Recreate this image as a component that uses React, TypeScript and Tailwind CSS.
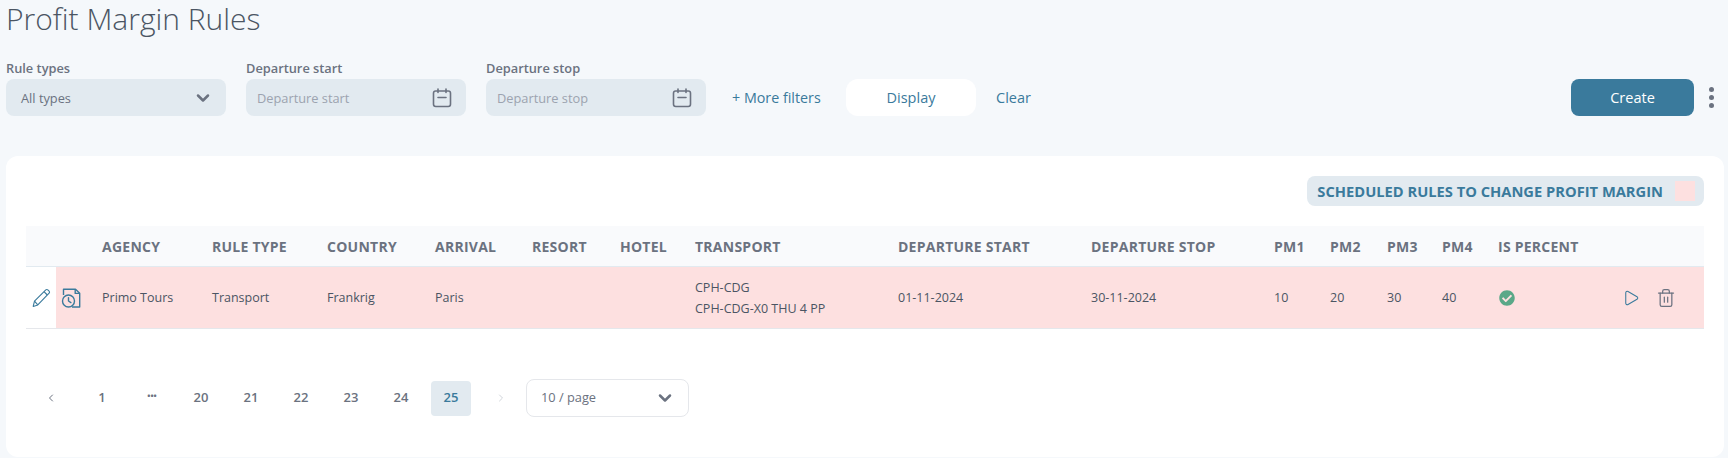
import React from "react";
import { Play, Trash2, ChevronLeft, ChevronRight, ChevronDown } from "lucide-react";
import { FaCheckCircle } from "react-icons/fa";

const font = "font-['Open_Sans',sans-serif]";

function Calendar() {
  return (
    <svg width="20" height="20" viewBox="0 0 20 20" fill="none" stroke="#6b7280" strokeWidth="1.6" strokeLinecap="round" strokeLinejoin="round">
      <rect x="1.5" y="3" width="17" height="15.5" rx="2.2" />
      <path d="M6 1v3.5M14 1v3.5M6 9.5h8" />
    </svg>
  );
}

function Pencil() {
  return (
    <svg width="20" height="20" viewBox="0 0 20 20" fill="none" stroke="#3a7a9c" strokeWidth="1.1" strokeLinejoin="round">
      <path d="M2.2 18.4l1.3-5.2L14.8 1.9a1.4 1.4 0 0 1 2 0l1.3 1.3a1.4 1.4 0 0 1 0 2L6.8 16.9z" />
      <path d="M3.5 13.2l3.3 3.7M13 3.7l3.3 3.3" />
    </svg>
  );
}

function FileClock() {
  return (
    <svg width="20" height="20" viewBox="0 0 20 20" fill="none" stroke="#3a7a9c" strokeWidth="1.4" strokeLinejoin="round">
      <path d="M2.5 7V1.2h12l4.2 4V19H11" />
      <path d="M14.2 1.2v4.2h4.5" />
      <circle cx="7.5" cy="13" r="6" />
      <path d="M7.5 9.6V13l2.4 1.6" strokeLinecap="round" />
    </svg>
  );
}

function Field({ label, value, placeholder }: { label: string; value: string; placeholder?: boolean }) {
  return (
    <div className="flex w-[220px] flex-col">
      <label className="h-[22px] text-[12.8px] leading-[22px] font-semibold text-[#6b7280]">{label}</label>
      <div className={`flex h-[37px] items-center justify-between rounded-lg bg-[#e2eaf0] ${placeholder ? "pr-[14px] pl-[11px]" : "pr-[13px] pl-[15px]"}`}>
        <span className={`pt-[2px] text-[12.8px] ${placeholder ? "text-[#9ca3af]" : "text-[#6b7280]"}`}>{value}</span>
        {placeholder ? <Calendar /> : <ChevronDown size={20} strokeWidth={3} className="text-[#6b7280]" />}
      </div>
    </div>
  );
}

const cols = [30, 46, 110, 115, 108, 97, 88, 75, 203, 193, 183, 56, 57, 55, 56, 124, 82];
const heads = ["", "", "AGENCY", "RULE TYPE", "COUNTRY", "ARRIVAL", "RESORT", "HOTEL", "TRANSPORT", "DEPARTURE START", "DEPARTURE STOP", "PM1", "PM2", "PM3", "PM4", "IS PERCENT", ""];

function PageNum({ n, active }: { n: string; active?: boolean }) {
  return (
    <div className={`flex h-[35px] w-[40px] items-center justify-center rounded text-[13px] font-semibold ${active ? "bg-[#e2eaf0] text-[#3a7a9c]" : "text-[#6b7280]"}`}>
      {n}
    </div>
  );
}

export default function App() {
  return (
    <div className={`h-[458px] w-[1728px] overflow-hidden bg-[#f5f8fb] pl-[6px] pr-[4px] ${font}`}>
      <h1 className="h-[47px] text-[30px] leading-[38px] font-light text-[#4b5563]">Profit Margin Rules</h1>
      <div className="flex h-[109px] items-start">
        <div className="flex gap-[20px] pt-[10px]">
          <Field label="Rule types" value="All types" />
          <Field label="Departure start" value="Departure start" placeholder />
          <Field label="Departure stop" value="Departure stop" placeholder />
        </div>
        <div className="mt-[32px] flex h-[37px] items-center">
          <span className="ml-[26px] w-[89px] text-[14.3px] whitespace-nowrap text-[#3a7a9c]">+ More filters</span>
          <div className="ml-[25px] flex h-[37px] w-[130px] items-center justify-center rounded-xl bg-white text-[14.5px] text-[#3a7a9c]">Display</div>
          <span className="ml-[20px] text-[14.5px] text-[#3a7a9c]">Clear</span>
        </div>
        <div className="mt-[32px] ml-auto flex h-[37px] items-center">
          <div className="flex h-[37px] w-[123px] items-center justify-center rounded-lg bg-[#3a7a9c] text-[14.5px] text-white">Create</div>
          <div className="mr-[10px] ml-[15px] flex flex-col gap-[3px]">
            <span className="h-[5px] w-[5px] rounded-full bg-[#6b7280]" />
            <span className="h-[5px] w-[5px] rounded-full bg-[#6b7280]" />
            <span className="h-[5px] w-[5px] rounded-full bg-[#6b7280]" />
          </div>
        </div>
      </div>
      <div className="h-[301px] rounded-xl bg-white px-[20px] pt-[20px]">
        <div className="flex justify-end">
          <div className="flex h-[30px] items-center rounded-lg bg-[#e2eaf0] pr-[9px] pl-[10px]">
            <span className="text-[14.7px] font-bold text-[#3a7a9c]">SCHEDULED RULES TO CHANGE PROFIT MARGIN</span>
            <span className="ml-[12px] h-[20px] w-[20px] bg-[#fde0e0]" />
          </div>
        </div>
        <table className="mt-[20px] w-[1678px] table-fixed border-collapse text-left">
          <colgroup>
            {cols.map((w, i) => (
              <col key={i} style={{ width: w }} />
            ))}
          </colgroup>
          <thead>
            <tr className="h-[40px] border-b border-[#e2eaf0] bg-[#f9fafc]">
              {heads.map((h, i) => (
                <th key={i} className="pt-[1px] text-[14px] font-bold tracking-[0.25px] whitespace-nowrap text-[#6b7280]">{h}</th>
              ))}
            </tr>
          </thead>
          <tbody>
            <tr className="h-[62px] border-b border-[#e5e7eb] text-[12.5px] text-[#4b5563] [&>td]:pt-[2px]">
              <td className="bg-white pl-[5px]"><Pencil /></td>
              <td className="bg-[#fde0e0] pl-[5px]"><FileClock /></td>
              <td className="bg-[#fde0e0]">Primo Tours</td>
              <td className="bg-[#fde0e0]">Transport</td>
              <td className="bg-[#fde0e0]">Frankrig</td>
              <td className="bg-[#fde0e0]">Paris</td>
              <td className="bg-[#fde0e0]"></td>
              <td className="bg-[#fde0e0]"></td>
              <td className="bg-[#fde0e0] leading-[21px]"><div>CPH-CDG</div><div>CPH-CDG-X0 THU 4 PP</div></td>
              <td className="bg-[#fde0e0]">01-11-2024</td>
              <td className="bg-[#fde0e0]">30-11-2024</td>
              <td className="bg-[#fde0e0]">10</td>
              <td className="bg-[#fde0e0]">20</td>
              <td className="bg-[#fde0e0]">30</td>
              <td className="bg-[#fde0e0]">40</td>
              <td className="bg-[#fde0e0]"><FaCheckCircle size={16} color="#5aa888" className="ml-[1px]" /></td>
              <td className="bg-[#fde0e0]">
                <div className="flex items-center gap-[16px]">
                  <Play size={18} strokeWidth={1.4} className="text-[#3a7a9c]" />
                  <Trash2 size={20} strokeWidth={1.5} className="text-[#6b7280]" />
                </div>
              </td>
            </tr>
          </tbody>
        </table>
        <div className="mt-[52px] flex items-start">
          <div className="flex h-[35px] items-center">
            <div className="flex w-[50px] justify-center"><ChevronLeft size={12} strokeWidth={2} className="text-[#6b7280]" /></div>
            <div className="ml-[6px]"><PageNum n="1" /></div>
            <div className="flex h-[35px] w-[59px] items-start justify-center pt-[9px] text-[11px] leading-[12px] tracking-[-1px] text-[#6b7280]">•••</div>
            <PageNum n="20" />
            <div className="ml-[10px]"><PageNum n="21" /></div>
            <div className="ml-[10px]"><PageNum n="22" /></div>
            <div className="ml-[10px]"><PageNum n="23" /></div>
            <div className="ml-[10px]"><PageNum n="24" /></div>
            <div className="ml-[10px]"><PageNum n="25" active /></div>
            <div className="flex w-[50px] justify-center pl-[9px]"><ChevronRight size={12} strokeWidth={2} className="text-[#d1d5db]" /></div>
          </div>
          <div className="mt-[-2px] ml-[5px] flex h-[38px] w-[163px] items-center justify-between rounded-lg border border-[#e5e7eb] pr-[13px] pl-[14px]">
            <span className="text-[12.8px] text-[#6b7280]">10 / page</span>
            <ChevronDown size={20} strokeWidth={3} className="text-[#6b7280]" />
          </div>
        </div>
      </div>
    </div>
  );
}
